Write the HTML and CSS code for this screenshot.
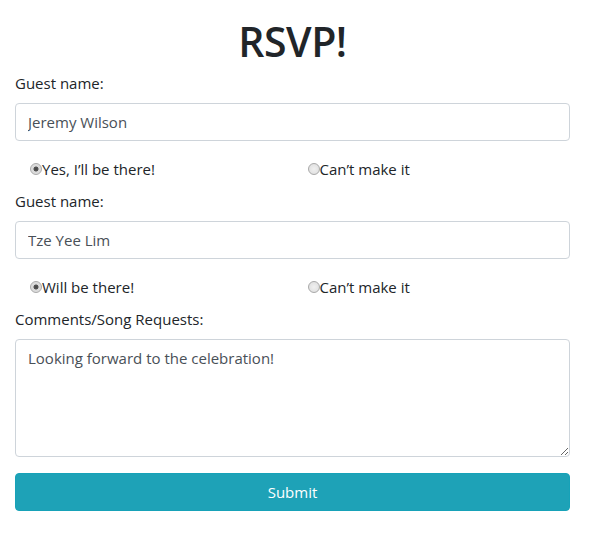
FILE: index.html
```html
<!DOCTYPE html>
<html>
<head>
<meta charset="utf-8">
<link rel="stylesheet" href="styles.css">
</head>
<body>
<div class="container">
  <h1 class="title">RSVP!</h1>
  <form class="form">
    <div class="group">
      <label class="label">Guest name:</label>
      <input class="control" type="text" value="Jeremy Wilson">
    </div>
    <div class="row">
      <label class="radio"><input type="radio" name="g1" checked>Yes, I’ll be there!</label>
      <label class="radio"><input type="radio" name="g1">Can’t make it</label>
    </div>
    <div class="group">
      <label class="label">Guest name:</label>
      <input class="control" type="text" value="Tze Yee Lim">
    </div>
    <div class="row">
      <label class="radio"><input type="radio" name="g2" checked>Will be there!</label>
      <label class="radio"><input type="radio" name="g2">Can’t make it</label>
    </div>
    <div class="group">
      <label class="label">Comments/Song Requests:</label>
      <textarea class="control area">Looking forward to the celebration!</textarea>
    </div>
    <button class="submit" type="button">Submit</button>
  </form>
</div>
</body>
</html>
```
FILE: styles.css
```css
html, body {
  margin: 0;
  padding: 0;
  background: #fff;
}
body {
  font-family: "Open Sans", "Noto Sans", sans-serif;
  font-size: 15px;
  line-height: 24px;
  color: #212529;
}
.container {
  width: 555px;
  padding: 0 15px;
}
.title {
  margin: 17px 0 6px;
  text-align: center;
  font-size: 41px;
  line-height: 48px;
  font-weight: 600;
  letter-spacing: -0.5px;
}
.form {
  display: flex;
  flex-direction: column;
}
.group {
  display: flex;
  flex-direction: column;
  margin-bottom: 16px;
}
.label {
  margin-bottom: 8px;
}
.control {
  box-sizing: border-box;
  width: 100%;
  height: 38px;
  padding: 6px 12px;
  font-family: inherit;
  font-size: 15px;
  line-height: 24px;
  color: #495057;
  background: #fff;
  border: 1px solid #ced4da;
  border-radius: 4px;
  margin: 0;
}
.area {
  height: 118px;
  resize: vertical;
  display: block;
}
.row {
  display: grid;
  grid-template-columns: 1fr 1fr;
  margin-bottom: 8px;
  margin-top: 0;
}
.radio {
  display: flex;
  align-items: center;
  padding-left: 15px;
}
.radio input {
  appearance: none;
  -webkit-appearance: none;
  box-sizing: border-box;
  margin: 0;
  width: 12px;
  height: 12px;
  border-radius: 50%;
  border: 1px solid #a9a9a9;
  background: radial-gradient(circle, #f0f0f0 0, #dcdcdc 100%);
}
.radio input:checked {
  background: radial-gradient(circle, #444 0, #555 2.2px, #d8d8d8 2.8px, #e4e4e4 100%);
}
.submit {
  box-sizing: border-box;
  width: 100%;
  height: 38px;
  border: 1px solid #17a2b8;
  background: #1ea2b7;
  color: #fff;
  font-family: inherit;
  font-size: 15px;
  border-radius: 4px;
  padding: 0;
}
```
